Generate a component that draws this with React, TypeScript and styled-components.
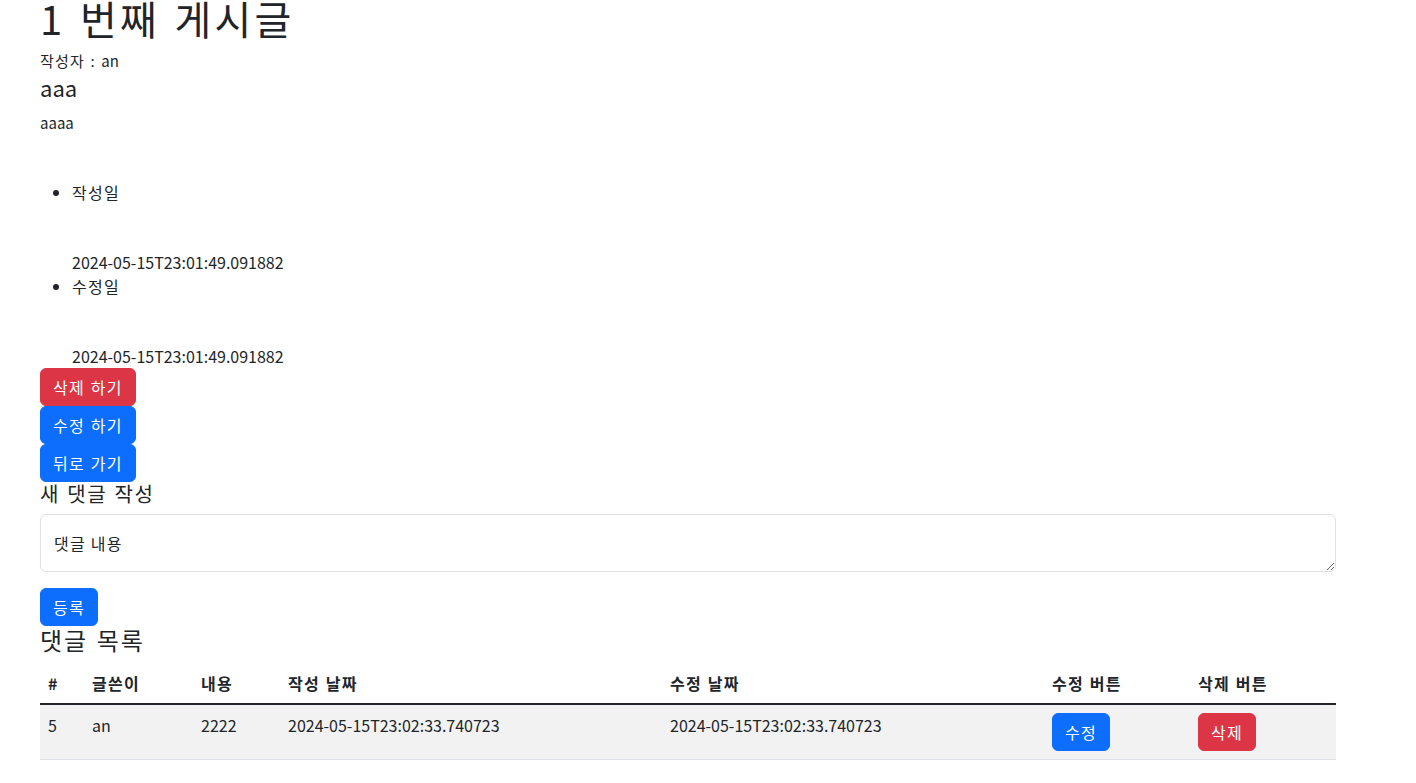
import React from "react";
import styled, { createGlobalStyle } from "styled-components";

const Global = createGlobalStyle`
  html, body { margin: 0; padding: 0; background: #fff; }
  body {
    font-family: "Noto Sans CJK KR", "Noto Sans", sans-serif;
    color: #212529;
    font-size: 16px;
    line-height: 1.5;
  }
  * { box-sizing: border-box; }
`;

const Ko = styled.span`
  letter-spacing: 0.08em;
  word-spacing: 0.06em;
`;

const Page = styled.div`
  width: 1296px;
  margin-left: 40px;
  display: flex;
  flex-direction: column;
  align-items: flex-start;
`;

const Title = styled.h1`
  font-size: 40px;
  font-weight: 400;
  line-height: 48px;
  margin: -6px 0 0;
`;

const Small = styled.div<{ $mt: number }>`
  font-size: 15px;
  line-height: 21px;
  margin-top: ${(p) => p.$mt}px;
`;

const Heading = styled.div<{ $size: number; $lh: number; $mt: number }>`
  font-size: ${(p) => p.$size}px;
  line-height: ${(p) => p.$lh}px;
  margin-top: ${(p) => p.$mt}px;
  font-weight: 400;
`;

const List = styled.ul`
  margin: 47px 0 0;
  padding-left: 32px;
  line-height: 24px;
`;

const Item = styled.li`
  line-height: 24px;
`;

const ItemValue = styled.div<{ $mt: number }>`
  margin-top: ${(p) => p.$mt}px;
`;

const Btn = styled.button<{ $variant: "danger" | "primary"; $mt?: number }>`
  font-family: inherit;
  font-size: 16px;
  line-height: 24px;
  padding: 6px 12px;
  border: 1px solid ${(p) => (p.$variant === "danger" ? "#dc3545" : "#0d6efd")};
  background: ${(p) => (p.$variant === "danger" ? "#dc3545" : "#0d6efd")};
  color: #fff;
  border-radius: 6px;
  margin-top: ${(p) => p.$mt ?? 0}px;
  cursor: pointer;
`;

const TextArea = styled.textarea`
  width: 100%;
  height: 58px;
  margin-top: 8px;
  padding: 16px 13px;
  font-family: inherit;
  font-size: 16px;
  letter-spacing: 0.08em;
  line-height: 24px;
  color: #212529;
  border: 1px solid #dee2e6;
  border-radius: 6px;
  display: block;
  &::placeholder { color: #212529; }
`;

const Table = styled.table`
  width: 100%;
  margin-top: 9px;
  border-collapse: collapse;
  table-layout: fixed;
`;

const Th = styled.th`
  text-align: left;
  font-weight: 700;
  padding: 8px;
  line-height: 24px;
  border-bottom: 2px solid #212529;
`;

const BodyRow = styled.tr`
  background: #f2f2f2;
`;

const Td = styled.td`
  padding: 8px;
  line-height: 24px;
  vertical-align: top;
  border-bottom: 1px solid #dee2e6;
`;

const colWidths = [44, 109, 87, 382, 382, 146, 146];

export default function App() {
  return (
    <>
      <Global />
      <Page>
        <Title><Ko>1 번째 게시글</Ko></Title>
        <Small $mt={8}><Ko>작성자 : </Ko>an</Small>
        <Heading $size={22} $lh={24} $mt={4}>aaa</Heading>
        <Small $mt={13}>aaaa</Small>
        <List>
          <Item>
            <Ko>작성일</Ko>
            <ItemValue $mt={46}>2024-05-15T23:01:49.091882</ItemValue>
          </Item>
          <Item>
            <Ko>수정일</Ko>
            <ItemValue $mt={46}>2024-05-15T23:01:49.091882</ItemValue>
          </Item>
        </List>
        <Btn $variant="danger"><Ko>삭제 하기</Ko></Btn>
        <Btn $variant="primary"><Ko>수정 하기</Ko></Btn>
        <Btn $variant="primary"><Ko>뒤로 가기</Ko></Btn>
        <Heading $size={20} $lh={24} $mt={0}><Ko>새 댓글 작성</Ko></Heading>
        <TextArea placeholder="댓글 내용" />
        <Btn $variant="primary" $mt={16}><Ko>등록</Ko></Btn>
        <Heading $size={24} $lh={28} $mt={0}><Ko>댓글 목록</Ko></Heading>
        <Table>
          <colgroup>
            {colWidths.map((w, i) => (
              <col key={i} style={{ width: w }} />
            ))}
          </colgroup>
          <thead>
            <tr>
              <Th>#</Th>
              <Th><Ko>글쓴이</Ko></Th>
              <Th><Ko>내용</Ko></Th>
              <Th><Ko>작성 날짜</Ko></Th>
              <Th><Ko>수정 날짜</Ko></Th>
              <Th><Ko>수정 버튼</Ko></Th>
              <Th><Ko>삭제 버튼</Ko></Th>
            </tr>
          </thead>
          <tbody>
            <BodyRow>
              <Td>5</Td>
              <Td>an</Td>
              <Td>2222</Td>
              <Td>2024-05-15T23:02:33.740723</Td>
              <Td>2024-05-15T23:02:33.740723</Td>
              <Td>
                <Btn $variant="primary"><Ko>수정</Ko></Btn>
              </Td>
              <Td>
                <Btn $variant="danger"><Ko>삭제</Ko></Btn>
              </Td>
            </BodyRow>
          </tbody>
        </Table>
      </Page>
    </>
  );
}
